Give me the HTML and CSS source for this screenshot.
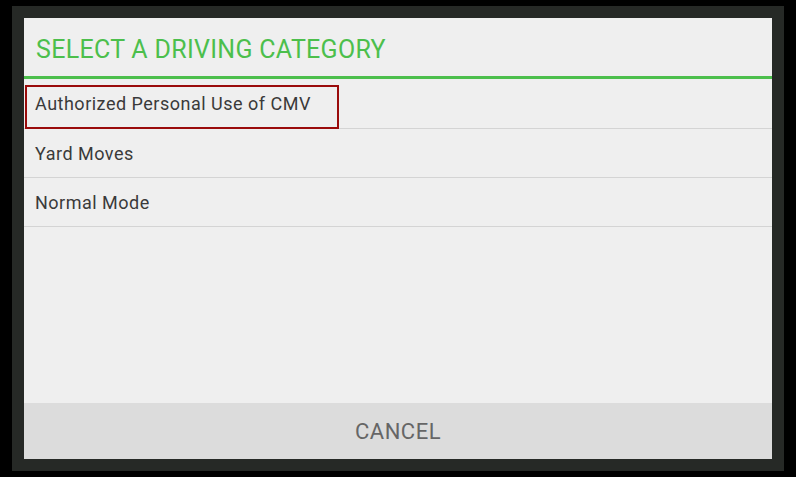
FILE: index.html
```html
<!DOCTYPE html>
<html lang="en">
<head>
    <meta charset="UTF-8">
    <meta name="viewport" content="width=device-width, initial-scale=1.0">
    <link rel="stylesheet" href="styles.css">
    <title>Select a driving category</title>
</head>
<body>
    <div class="frame">
        <div class="dialog">
            <h1 class="dialogTitle">SELECT A DRIVING CATEGORY</h1>
            <ul class="options">
                <li class="option">
                    Authorized Personal Use of CMV
                    <span class="highlight"></span>
                </li>
                <li class="option">Yard Moves</li>
                <li class="option">Normal Mode</li>
            </ul>
            <button class="cancelBtn">CANCEL</button>
        </div>
    </div>
</body>
</html>
```

FILE: styles.css
```css
        html, body{
            margin: 0;
            background: #000;
        }
        /*dark tablet frame around the dialog*/
        .frame{
            width: 772px;
            height: 465px;
            margin: 6px 0 0 12px;
            padding: 12px;
            box-sizing: border-box;
            background: #262926;
        }
        .dialog{
            height: 441px;
            display: flex;
            flex-direction: column;
            background: #efefef;
            font-family: Roboto, 'Liberation Sans', sans-serif;
        }
        .dialogTitle{
            margin: 0;
            height: 61px;
            padding: 17px 0 0 12px;
            box-sizing: border-box;
            font-size: 25px;
            font-weight: 400;
            letter-spacing: 0.3px;
            line-height: 30px;
            color: #4cbf4c;
            border-bottom: 3px solid #4cbf4c;
        }
        .options{
            list-style: none;
            margin: 0;
            padding: 0;
            flex: 1;
        }
        .option{
            position: relative;
            height: 49px;
            padding-left: 11px;
            display: flex;
            align-items: center;
            font-size: 18px;
            letter-spacing: 0.5px;
            color: #3a3a3a;
            border-bottom: 1px solid #d4d4d4;
        }
        .option + .option{
            height: 48px;
        }
        .highlight{
            position: absolute;
            left: 1px;
            top: 6px;
            width: 314px;
            height: 44px;
            box-sizing: border-box;
            border: 2px solid #9a0b0b;
        }
        .cancelBtn{
            height: 56px;
            border: none;
            background: #dcdcdc;
            font-family: inherit;
            font-size: 22px;
            letter-spacing: 0.5px;
            color: #666;
            padding: 0;
        }
```
